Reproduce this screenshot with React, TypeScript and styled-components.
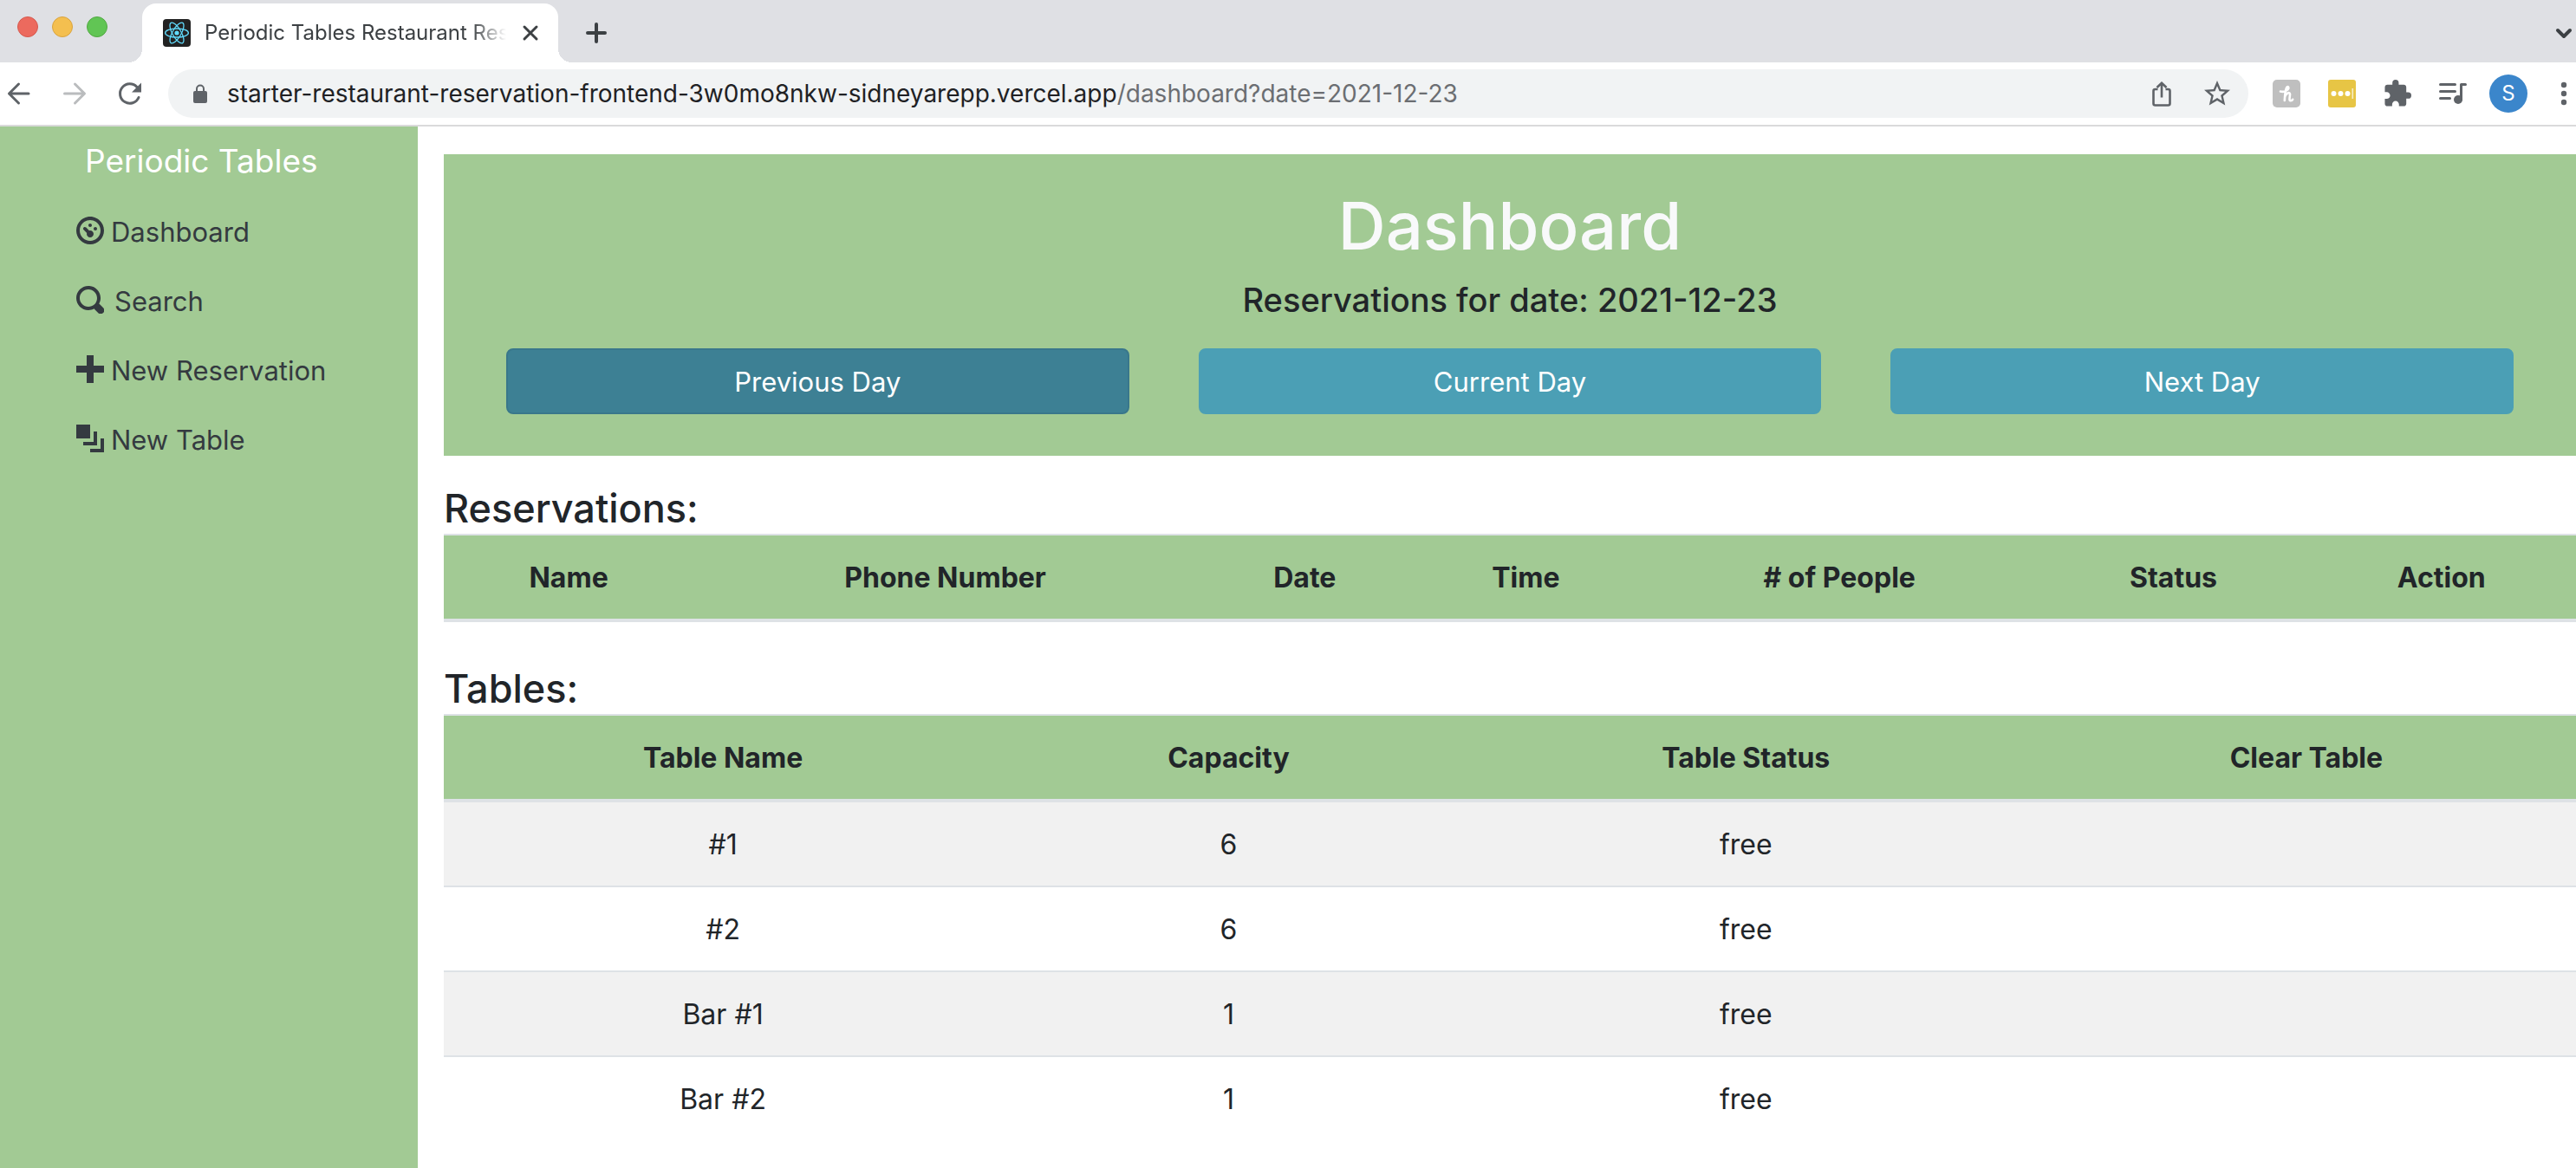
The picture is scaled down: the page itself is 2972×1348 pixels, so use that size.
import React from "react";
import styled, { createGlobalStyle } from "styled-components";
import { MdExtension, MdStarOutline } from "react-icons/md";

const green = "#a2ca94";

const GlobalStyle = createGlobalStyle`
  *, *::before, *::after { box-sizing: border-box; }
  body {
    margin: 0;
    background: #fff;
    color: #212529;
    font-family: Inter, "Liberation Sans", sans-serif;
    font-size: 32px;
    line-height: 48px;
  }
  h1, h2, h3, p { margin: 0; font-weight: 500; }
  button { font: inherit; border: 0; padding: 0; background: none; color: inherit; }
  svg { display: block; flex: none; }
`;

const Page = styled.div`
  display: flex;
  flex-direction: column;
  min-height: 100vh;
`;

const TabStrip = styled.div`
  display: flex;
  height: 72px;
  padding: 0 2px 0 20px;
  background: #dfe0e4;
  color: #3c4043;
`;

const WindowControls = styled.div`
  display: flex;
  gap: 16px;
  width: 144px;
  padding-top: 19px;
`;

const Light = styled.button<{ $fill: string; $edge: string }>`
  width: 24px;
  height: 24px;
  border: 1px solid ${(p) => p.$edge};
  border-radius: 50%;
  background: ${(p) => p.$fill};
`;

const Tab = styled.div`
  position: relative;
  display: flex;
  align-items: center;
  width: 480px;
  margin-top: 4px;
  padding: 0 20px 0 24px;
  border-radius: 16px 16px 0 0;
  background: #fff;

  &::before, &::after {
    content: "";
    position: absolute;
    bottom: 0;
    width: 16px;
    height: 16px;
  }
  &::before {
    right: 100%;
    background: radial-gradient(circle at 0 0, transparent 16px, #fff 16px);
  }
  &::after {
    left: 100%;
    background: radial-gradient(circle at 100% 0, transparent 16px, #fff 16px);
  }
`;

const TabTitle = styled.span`
  flex: 1;
  min-width: 0;
  margin: 0 16px;
  overflow: hidden;
  white-space: nowrap;
  font-size: 24px;
  line-height: 32px;
  mask-image: linear-gradient(to right, #000 calc(100% - 40px), transparent);
`;

const IconButton = styled.button`
  display: flex;
  align-items: center;
  justify-content: center;
  flex: none;
`;

const NewTab = styled(IconButton)`
  margin-left: 28px;
  padding-top: 4px;
`;

const TabSearch = styled(IconButton)`
  margin-left: auto;
  padding-top: 4px;
`;

const Toolbar = styled.div`
  display: flex;
  align-items: center;
  height: 74px;
  padding-left: 6px;
  border-bottom: 2px solid #dadadb;
  color: #5f6368;
`;

const NavButtons = styled.div`
  display: flex;
  gap: 32px;
  width: 188px;
`;

const AddressBar = styled.div`
  display: flex;
  align-items: center;
  flex: 1;
  height: 56px;
  padding: 0 18px 0 28px;
  border-radius: 28px;
  background: #f1f3f4;
`;

const Url = styled.p`
  flex: 1;
  margin-left: 22px;
  font-size: 28px;
  font-weight: 400;
  line-height: 36px;
  color: #6b6e72;

  b { font-weight: 400; color: #202124; }
`;

const AddressActions = styled.div`
  display: flex;
  align-items: center;
  gap: 30px;
`;

const BrowserActions = styled.div`
  display: flex;
  align-items: center;
  gap: 26px;
  padding-left: 28px;
`;

const Extensions = styled.div`
  display: flex;
  align-items: center;
  gap: 32px;
`;

const Avatar = styled.button`
  width: 44px;
  height: 44px;
  border-radius: 50%;
  background: #3b86cb;
  color: #fff;
  font-size: 24px;
  line-height: 44px;
  text-align: center;
`;

const Body = styled.div`
  display: flex;
  flex: 1;
`;

const Sidebar = styled.nav`
  flex: none;
  width: 482px;
  padding: 8px 0 0 88px;
  background: ${green};
  color: #343a40;
`;

const Brand = styled.a`
  display: block;
  padding: 4px 0 4px 10px;
  color: #fff;
  font-size: 37px;
  line-height: 56px;
  text-decoration: none;
`;

const NavList = styled.ul`
  margin: 0;
  padding: 10px 0 0;
  list-style: none;
`;

const NavLink = styled.a<{ $wide?: boolean }>`
  display: flex;
  align-items: center;
  gap: ${(p) => (p.$wide ? 12 : 8)}px;
  height: 80px;
  color: inherit;
  font-size: 31px;
  text-decoration: none;

  svg { margin-bottom: 4px; }
`;

const Main = styled.main`
  flex: 1;
  min-width: 0;
  padding: 32px 0 32px 30px;
`;

const Banner = styled.header`
  padding: 32px 72px 48px;
  margin-bottom: 32px;
  background: ${green};
  text-align: center;
`;

const Title = styled.h1`
  color: #f8f9fa;
  font-size: 76px;
  line-height: 100px;
`;

const Subtitle = styled.h2`
  padding: 12px 0 16px;
  font-size: 38px;
  line-height: 48px;
`;

const DayButtons = styled.div`
  display: grid;
  grid-template-columns: repeat(3, 1fr);
  gap: 80px;
  padding-top: 16px;
`;

const DayButton = styled.button<{ $active?: boolean }>`
  height: 76px;
  padding-top: 2px;
  border: 2px solid ${(p) => (p.$active ? "#39778b" : "#4b9fb5")};
  border-radius: 8px;
  background: ${(p) => (p.$active ? "#3d8094" : "#4b9fb5")};
  color: #fff;
  font-size: 31px;
`;

const Section = styled.section`
  margin-bottom: 48px;
`;

const SectionTitle = styled.h3`
  font-size: 45px;
  line-height: 58px;
`;

const Table = styled.table`
  width: 100%;
  border-spacing: 0;
  text-align: center;

  th, td {
    padding: 25px 24px 23px;
    border-top: 2px solid #dee2e6;
    line-height: 48px;
  }
  th {
    border-bottom: 4px solid #dee2e6;
    background: ${green};
    font-weight: 700;
  }
  tbody tr:first-child td { border-top: 0; }
  tbody tr:nth-child(odd) { background: #f1f1f1; }
`;

const ReactLogo = () => (
  <svg width="32" height="32" viewBox="0 0 32 32" fill="none" stroke="#61dafb" strokeWidth="1.3">
    <rect width="32" height="32" rx="4" fill="#222" stroke="none" />
    <circle cx="16" cy="16" r="2.6" fill="#61dafb" stroke="none" />
    <ellipse cx="16" cy="16" rx="13.4" ry="5" />
    <ellipse cx="16" cy="16" rx="13.4" ry="5" transform="rotate(60 16 16)" />
    <ellipse cx="16" cy="16" rx="13.4" ry="5" transform="rotate(120 16 16)" />
  </svg>
);

const Stroke = ({ size, d, w = 3, color = "currentColor" }: { size: number; d: string; w?: number; color?: string }) => (
  <svg width={size} height={size} viewBox={`0 0 ${size} ${size}`} fill="none" stroke={color} strokeWidth={w} strokeLinecap="round" strokeLinejoin="round">
    <path d={d} />
  </svg>
);

const Reload = () => (
  <svg width="32" height="32" viewBox="0 0 32 32" fill="none" stroke="currentColor" strokeWidth="3" strokeLinecap="round">
    <path d="M26 20.500A11.200 11.200 0 1 1 24 8.500" />
    <path d="M29 3.500v11H18z" fill="currentColor" stroke="none" />
  </svg>
);

const Lock = () => (
  <svg width="18" height="24" viewBox="0 0 18 24">
    <rect x="1" y="9" width="16" height="14" rx="2" fill="#5f6368" />
    <path d="M5 10V6.500a4 4 0 0 1 8 0V10" fill="none" stroke="#5f6368" strokeWidth="2" />
  </svg>
);

const Share = () => (
  <svg width="32" height="32" viewBox="0 0 32 32" fill="none" stroke="currentColor" strokeWidth="2.600">
    <path d="M11.500 11H8.500a2 2 0 0 0-2 2v14.500a2 2 0 0 0 2 2h15a2 2 0 0 0 2-2V13a2 2 0 0 0-2-2h-3" />
    <path d="M16 20.500V4M10.500 9 16 3.700 21.500 9" />
  </svg>
);

const Honey = () => (
  <svg width="32" height="32" viewBox="0 0 32 32" fill="none" stroke="#fff" strokeLinecap="round" strokeLinejoin="round" strokeWidth="2.600">
    <rect width="32" height="32" rx="5" fill="#bfbfbf" stroke="none" />
    <path d="M9 13.500C14 15 19.500 11 18 8.500 16.500 7 14.500 10 13.800 24M14 20c1-4 5.500-6.500 6-3.500.3 2-1.800 8 .8 7.800 1.200 0 2-.6 2.400-1.500" />
  </svg>
);

const Password = () => (
  <svg width="32" height="32" viewBox="0 0 32 32" fill="#fff">
    <rect width="32" height="32" rx="3" fill="#e7c545" />
    <circle cx="6.500" cy="16" r="3" />
    <circle cx="14.500" cy="16" r="3" />
    <circle cx="22.500" cy="16" r="3" />
    <rect x="27.500" y="10" width="1.600" height="12" opacity=".7" />
  </svg>
);

const Playlist = () => (
  <svg width="32" height="32" viewBox="0 0 32 32" fill="none" stroke="currentColor" strokeWidth="3" strokeLinecap="round">
    <path d="M1.500 5.500h17M1.500 13.500h17M1.500 21.500h11" />
    <path d="M25.500 23V5.500h5" strokeLinejoin="round" />
    <circle cx="22" cy="23" r="5" fill="currentColor" stroke="none" />
  </svg>
);

const More = () => (
  <svg width="30" height="32" viewBox="0 0 30 32" fill="currentColor">
    <circle cx="16" cy="6" r="3.200" />
    <circle cx="16" cy="16" r="3.200" />
    <circle cx="16" cy="26" r="3.200" />
  </svg>
);

const Oi = ({ children }: { children: React.ReactNode }) => (
  <svg width="32" height="32" viewBox="0 0 8 8" fill="currentColor">{children}</svg>
);

const links = [
  {
    label: "Dashboard",
    icon: <path d="M4 0c-2.200 0-4 1.800-4 4s1.800 4 4 4 4-1.800 4-4-1.800-4-4-4zm0 1c1.660 0 3 1.340 3 3s-1.340 3-3 3-3-1.340-3-3 1.340-3 3-3zm0 1c-.28 0-.5.22-.5.5s.22.5.5.5.5-.22.5-.5-.22-.5-.5-.5zm-1.660 1a.5.5 0 0 0-.19.840l.910.910c-.020.080-.060.160-.060.250 0 .55.450 1 1 1s1-.450 1-1-.450-1-1-1c-.090 0-.170.040-.250.060l-.910-.910a.5.5 0 0 0-.440-.150.5.5 0 0 0-.060 0zm3.160 0c-.28 0-.5.22-.5.5s.22.5.5.5.5-.22.5-.5-.22-.5-.5-.5z" />,
  },
  {
    label: "Search",
    wide: true,
    icon: <path d="M3.500 0c-1.930 0-3.500 1.570-3.500 3.500s1.570 3.500 3.500 3.500c.590 0 1.170-.140 1.660-.410a1 1 0 0 0 .130.130l1 1a1.020 1.020 0 1 0 1.440-1.440l-1-1a1 1 0 0 0-.160-.130c.270-.490.440-1.060.440-1.660 0-1.930-1.550-3.500-3.500-3.500zm0 1c1.390 0 2.500 1.110 2.500 2.500 0 .660-.240 1.270-.660 1.720-.010.010-.020.020-.030.030a1 1 0 0 0-.130.130c-.440.400-1.040.630-1.690.630-1.390 0-2.500-1.110-2.500-2.500s1.110-2.500 2.500-2.500z" />,
  },
  { label: "New Reservation", icon: <path d="M3 0v3h-3v2h3v3h2v-3h3v-2h-3v-3h-2z" /> },
  { label: "New Table", icon: <path d="M0 0v4h4v-4h-4zm5 2v3h-3v1h4v-4h-1zm2 2v3h-3v1h4v-4h-1z" /> },
];

const tables = [
  { name: "#1", capacity: 6, status: "free" },
  { name: "#2", capacity: 6, status: "free" },
  { name: "Bar #1", capacity: 1, status: "free" },
  { name: "Bar #2", capacity: 1, status: "free" },
];

export default function App() {
  return (
    <Page>
      <GlobalStyle />
      <TabStrip>
        <WindowControls>
          <Light aria-label="Close window" $fill="#ec6a5e" $edge="#d5594e" />
          <Light aria-label="Minimize window" $fill="#f4bf4f" $edge="#d9a33f" />
          <Light aria-label="Zoom window" $fill="#61c554" $edge="#52a842" />
        </WindowControls>
        <Tab>
          <ReactLogo />
          <TabTitle>Periodic Tables Restaurant Reservation System</TabTitle>
          <IconButton aria-label="Close tab">
            <Stroke size={24} d="M5 5l14 14M19 5 5 19" />
          </IconButton>
        </Tab>
        <NewTab aria-label="New tab">
          <Stroke size={32} d="M16 6v20M6 16h20" w={4} />
        </NewTab>
        <TabSearch aria-label="Search tabs">
          <Stroke size={24} d="M5 9l7 7 7-7" w={4} />
        </TabSearch>
      </TabStrip>
      <Toolbar>
        <NavButtons>
          <IconButton aria-label="Back"><Stroke size={32} d="M27 16H4.500M15.500 5 4.500 16l11 11" /></IconButton>
          <IconButton aria-label="Forward"><Stroke size={32} color="#babcbe" d="M4.500 16H27M16.500 5l11 11-11 11" /></IconButton>
          <IconButton aria-label="Reload"><Reload /></IconButton>
        </NavButtons>
        <AddressBar>
          <Lock />
          <Url><b>starter-restaurant-reservation-frontend-3w0mo8nkw-sidneyarepp.vercel.app</b>/dashboard?date=2021-12-23</Url>
          <AddressActions>
            <IconButton aria-label="Share"><Share /></IconButton>
            <IconButton aria-label="Bookmark"><MdStarOutline size={36} /></IconButton>
          </AddressActions>
        </AddressBar>
        <BrowserActions>
          <Extensions>
            <IconButton aria-label="Honey"><Honey /></IconButton>
            <IconButton aria-label="Passwords"><Password /></IconButton>
            <IconButton aria-label="Extensions"><MdExtension size={32} viewBox="1 1 22 22" /></IconButton>
            <IconButton aria-label="Media"><Playlist /></IconButton>
          </Extensions>
          <Avatar>S</Avatar>
          <IconButton aria-label="Menu"><More /></IconButton>
        </BrowserActions>
      </Toolbar>
      <Body>
        <Sidebar>
          <Brand href="#">Periodic Tables</Brand>
          <NavList>
            {links.map((l) => (
              <li key={l.label}>
                <NavLink href="#" $wide={l.wide}>
                  <Oi>{l.icon}</Oi>
                  {l.label}
                </NavLink>
              </li>
            ))}
          </NavList>
        </Sidebar>
        <Main>
          <Banner>
            <Title>Dashboard</Title>
            <Subtitle>Reservations for date: 2021-12-23</Subtitle>
            <DayButtons>
              <DayButton $active>Previous Day</DayButton>
              <DayButton>Current Day</DayButton>
              <DayButton>Next Day</DayButton>
            </DayButtons>
          </Banner>
          <Section>
            <SectionTitle>Reservations:</SectionTitle>
            <Table>
              <thead>
                <tr>
                  {["Name", "Phone Number", "Date", "Time", "# of People", "Status", "Action"].map((h) => (
                    <th key={h}>{h}</th>
                  ))}
                </tr>
              </thead>
            </Table>
          </Section>
          <Section>
            <SectionTitle>Tables:</SectionTitle>
            <Table>
              <thead>
                <tr>
                  {["Table Name", "Capacity", "Table Status", "Clear Table"].map((h) => (
                    <th key={h}>{h}</th>
                  ))}
                </tr>
              </thead>
              <tbody>
                {tables.map((t) => (
                  <tr key={t.name}>
                    <td>{t.name}</td>
                    <td>{t.capacity}</td>
                    <td>{t.status}</td>
                    <td />
                  </tr>
                ))}
              </tbody>
            </Table>
          </Section>
        </Main>
      </Body>
    </Page>
  );
}
